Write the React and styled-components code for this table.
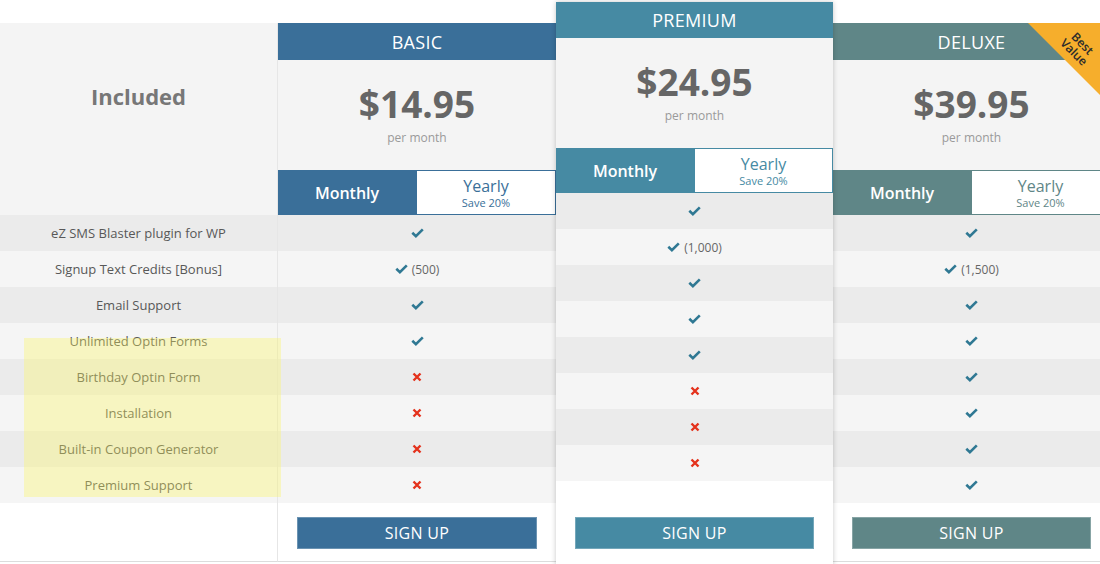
import React from 'react';
import styled, { createGlobalStyle } from 'styled-components';

const GlobalStyle = createGlobalStyle`
  html, body {
    margin: 0;
    padding: 0;
    background: #ffffff;
    font-family: "Open Sans", "Liberation Sans", sans-serif;
    overflow: hidden;
  }
  body {
    width: 1100px;
    height: 564px;
  }
`;

const features = [
  'eZ SMS Blaster plugin for WP',
  'Signup Text Credits [Bonus]',
  'Email Support',
  'Unlimited Optin Forms',
  'Birthday Optin Form',
  'Installation',
  'Built-in Coupon Generator',
  'Premium Support'
];

const plans = [
  {
    name: 'BASIC',
    price: '$14.95',
    color: '#3a6f99',
    width: 278,
    values: [true, '(500)', true, true, false, false, false, false]
  },
  {
    name: 'PREMIUM',
    price: '$24.95',
    color: '#468aa3',
    width: 277,
    featured: true,
    values: [true, '(1,000)', true, true, true, false, false, false]
  },
  {
    name: 'DELUXE',
    price: '$39.95',
    color: '#5f8687',
    width: 277,
    ribbon: true,
    values: [true, '(1,500)', true, true, true, true, true, true]
  }
];

const Table = styled.div`
  display: flex;
  align-items: flex-start;
  width: 1110px;
  padding-top: 23px;
`;

const LabelColumn = styled.div`
  position: relative;
  width: 277px;
  flex-shrink: 0;
  border-right: 1px solid #e6e6e6;
  border-bottom: 1px solid #dcdcdc;
`;

const IncludedCell = styled.div`
  height: 192px;
  background: #f4f4f4;
  display: flex;
  align-items: center;
  justify-content: center;
  padding-bottom: 46px;
  box-sizing: border-box;
  font-size: 22px;
  font-weight: 700;
  color: #777777;
`;

const Row = styled.div`
  height: 36px;
  display: flex;
  align-items: center;
  justify-content: center;
  gap: 4px;
  background: ${p => (p.$odd ? '#f5f5f5' : '#ebebeb')};
  font-size: 13px;
  color: #585858;
`;

const Highlight = styled.div`
  position: absolute;
  left: 24px;
  top: 315px;
  width: 257px;
  height: 159px;
  background: rgba(252, 246, 95, 0.34);
  z-index: 3;
  pointer-events: none;
`;

const Footer = styled.div`
  height: ${p => (p.$tall ? '88px' : '58px')};
  padding: ${p => (p.$tall ? '36px' : '14px')} 19px 0;
  box-sizing: border-box;
  background: #ffffff;
`;

const PlanColumn = styled.div`
  position: relative;
  width: ${p => p.$width}px;
  flex-shrink: 0;
  margin-top: ${p => (p.$featured ? '-21px' : '0')};
  z-index: ${p => (p.$featured ? 2 : 1)};
  box-shadow: ${p => (p.$featured ? '0 0 5px rgba(0, 0, 0, 0.22)' : 'none')};
  border-bottom: ${p => (p.$featured ? 'none' : '1px solid #dcdcdc')};
  background: #ffffff;
`;

const Header = styled.div`
  height: ${p => (p.$featured ? '36px' : '37px')};
  background: ${p => p.$color};
  color: #ffffff;
  font-size: 18px;
  display: flex;
  align-items: center;
  justify-content: center;
  letter-spacing: 0.3px;
`;

const PriceBox = styled.div`
  height: 110px;
  background: #f4f4f4;
  display: flex;
  flex-direction: column;
  align-items: center;
  padding-top: 23px;
  box-sizing: border-box;
`;

const Price = styled.div`
  font-size: 37px;
  font-weight: 700;
  color: #666666;
  line-height: 42px;
`;

const PerMonth = styled.div`
  font-size: 12px;
  color: #9a9a9a;
  margin-top: 4px;
`;

const Toggle = styled.div`
  height: 45px;
  display: grid;
  grid-template-columns: 138px 1fr;
  background: #f4f4f4;
`;

const MonthlyTab = styled.div`
  background: ${p => p.$color};
  color: #ffffff;
  font-size: 16px;
  font-weight: 600;
  display: flex;
  align-items: center;
  justify-content: center;
  padding-top: 1px;
`;

const YearlyTab = styled.div`
  background: #ffffff;
  border: 1px solid ${p => p.$color};
  color: ${p => p.$color};
  display: flex;
  flex-direction: column;
  align-items: center;
  justify-content: center;
`;

const YearlyLabel = styled.span`
  display: block;
  font-size: 16px;
  line-height: 20px;
`;

const SaveLabel = styled.span`
  display: block;
  font-size: 11px;
  line-height: 14px;
`;

const Value = styled.span`
  font-size: 12px;
  color: #666666;
`;

const SignUp = styled.button`
  width: 100%;
  height: 32px;
  border: 1px solid rgba(255, 255, 255, 0.25);
  background: ${p => p.$color};
  color: #ffffff;
  font-family: "Open Sans", "Liberation Sans", sans-serif;
  font-size: 16px;
  letter-spacing: 0.3px;
  cursor: pointer;
`;

const Ribbon = styled.div`
  position: absolute;
  top: 0;
  right: 0;
  width: 82px;
  height: 82px;
  background: #f6ae2c;
  clip-path: polygon(0 0, 100% 0, 100% 100%);
  z-index: 2;
`;

const RibbonText = styled.div`
  position: absolute;
  left: 25px;
  top: 13px;
  width: 50px;
  transform: rotate(45deg);
  transform-origin: center;
  text-align: center;
  font-size: 12px;
  font-weight: 600;
  line-height: 12px;
  color: #2b2b2b;
`;

function Check() {
  return (
    <svg width="13" height="10" viewBox="0 0 13 10">
      <path d="M1.3 4.8 L4.9 8.2 L11.8 1.4" fill="none" stroke="#2f7893" strokeWidth="2.6" />
    </svg>
  );
}

function Cross() {
  return (
    <svg width="10" height="10" viewBox="0 0 10 10">
      <path d="M1.5 1.5 L8.5 8.5 M8.5 1.5 L1.5 8.5" fill="none" stroke="#e4321c" strokeWidth="2.4" />
    </svg>
  );
}

function Cell({ value }) {
  if (value === false) return <Cross />;
  return (
    <>
      <Check />
      {typeof value === 'string' && <Value>{value}</Value>}
    </>
  );
}

function Plan({ plan }) {
  return (
    <PlanColumn $width={plan.width} $featured={plan.featured}>
      {plan.ribbon && (
        <Ribbon>
          <RibbonText>Best<br />Value</RibbonText>
        </Ribbon>
      )}
      <Header $color={plan.color} $featured={plan.featured}>{plan.name}</Header>
      <PriceBox>
        <Price>{plan.price}</Price>
        <PerMonth>per month</PerMonth>
      </PriceBox>
      <Toggle>
        <MonthlyTab $color={plan.color}>Monthly</MonthlyTab>
        <YearlyTab $color={plan.color}>
          <YearlyLabel>Yearly</YearlyLabel>
          <SaveLabel>Save 20%</SaveLabel>
        </YearlyTab>
      </Toggle>
      {plan.values.map((v, i) => (
        <Row key={i} $odd={i % 2 === 1}>
          <Cell value={v} />
        </Row>
      ))}
      <Footer $tall={plan.featured}>
        <SignUp $color={plan.color}>SIGN UP</SignUp>
      </Footer>
    </PlanColumn>
  );
}

export default function App() {
  return (
    <>
      <GlobalStyle />
      <Table>
        <LabelColumn>
          <IncludedCell>Included</IncludedCell>
          {features.map((f, i) => (
            <Row key={f} $odd={i % 2 === 1}>{f}</Row>
          ))}
          <Footer />
          <Highlight />
        </LabelColumn>
        {plans.map(p => (
          <Plan key={p.name} plan={p} />
        ))}
      </Table>
    </>
  );
}
